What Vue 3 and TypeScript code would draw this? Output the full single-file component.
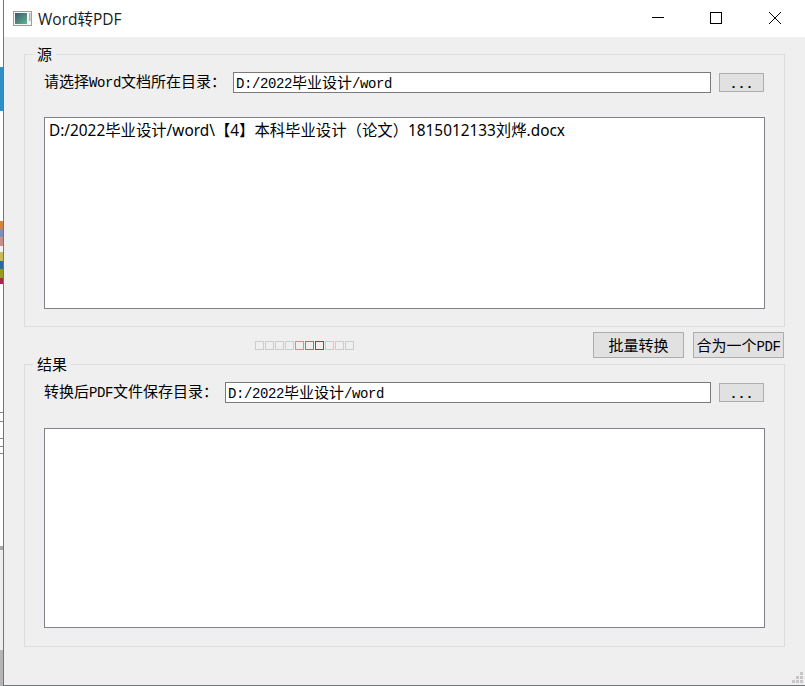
<script setup lang="ts">
const splitter = [
  '#cccccc', '#cccccc', '#cccccc', '#cccccc', '#c99393', '#c26464', '#b93333', '#cccccc', '#cccccc', '#cccccc',
]
const strip = [
  { h: 67, c: '#ffffff' },
  { h: 44, c: '#2f8fc8' },
  { h: 110, c: '#ffffff' },
  { h: 8, c: '#d9823c' },
  { h: 8, c: '#7f8fb8' },
  { h: 9, c: '#c98f88' },
  { h: 6, c: '#f2f2f2' },
  { h: 9, c: '#c9b95a' },
  { h: 8, c: '#2a6a9a' },
  { h: 9, c: '#9a9a20' },
  { h: 6, c: '#a8284c' },
  { h: 128, c: '#ffffff' },
  { h: 1, c: '#888888' },
  { h: 8, c: '#ffffff' },
  { h: 1, c: '#888888' },
  { h: 16, c: '#ffffff' },
  { h: 1, c: '#888888' },
  { h: 7, c: '#ffffff' },
  { h: 1, c: '#888888' },
  { h: 6, c: '#ffffff' },
  { h: 1, c: '#888888' },
  { h: 92, c: '#ffffff' },
  { h: 4, c: '#aaaaaa' },
  { h: 100, c: '#eeeeee' },
  { h: 36, c: '#b5b5b5' },
]
</script>

<template>
  <div class="screen">
    <div class="strip">
      <div v-for="(s, i) in strip" :key="i" :style="{ height: s.h + 'px', background: s.c }"></div>
    </div>
    <div class="window">
      <header class="titlebar">
        <svg class="appicon" width="19" height="15" viewBox="0 0 19 15">
          <defs>
            <linearGradient id="ic" x1="0" y1="0" x2="1" y2="1">
              <stop offset="0" stop-color="#3c5a6e" />
              <stop offset="1" stop-color="#5fb48c" />
            </linearGradient>
          </defs>
          <rect x="0.5" y="0.5" width="18" height="14" fill="#f6f6f6" stroke="#999ea3" />
          <rect x="2" y="2" width="12" height="11" fill="url(#ic)" />
          <rect x="16" y="2" width="1.5" height="8" fill="#a8b4b8" />
        </svg>
        <span class="wintitle">Word转PDF</span>
        <div class="controls">
          <button class="ctl ctl-min"><svg width="12" height="12" viewBox="0 0 12 12"><path d="M0 5.5H12" stroke="#000" fill="none" /></svg></button>
          <button class="ctl"><svg width="12" height="12" viewBox="0 0 12 12"><rect x="0.5" y="0.5" width="11" height="11" stroke="#000" fill="none" /></svg></button>
          <button class="ctl"><svg width="12" height="12" viewBox="0 0 12 12"><path d="M0 0L12 12M12 0L0 12" stroke="#000" fill="none" /></svg></button>
        </div>
      </header>

      <main class="content">
        <section class="group group-source">
          <span class="legend">源</span>
          <div class="row">
            <label class="label label-source">请选择<span class="m">Word</span>文档所在目录：</label>
            <div class="field"><span class="m">D:/2022</span>毕业设计<span class="m">/word</span></div>
            <button class="btn dots">...</button>
          </div>
          <div class="list list-source">D:/2022毕业设计/word\【4】本科毕业设计（论文）1815012133刘烨.docx</div>
        </section>

        <div class="actions">
          <div class="handle">
            <i v-for="(c, i) in splitter" :key="i" :style="{ borderColor: c }"></i>
          </div>
          <button class="btn action batch">批量转换</button>
          <button class="btn action merge">合为一个<span class="m">PDF</span></button>
        </div>

        <section class="group group-result">
          <span class="legend">结果</span>
          <div class="row">
            <label class="label label-result">转换后<span class="m">PDF</span>文件保存目录：</label>
            <div class="field"><span class="m">D:/2022</span>毕业设计<span class="m">/word</span></div>
            <button class="btn dots">...</button>
          </div>
          <div class="list list-result"></div>
        </section>

        <div class="grip">
          <i style="grid-area: 1 / 3"></i>
          <i style="grid-area: 2 / 2"></i>
          <i style="grid-area: 2 / 3"></i>
          <i style="grid-area: 3 / 1"></i>
          <i style="grid-area: 3 / 2"></i>
          <i style="grid-area: 3 / 3"></i>
        </div>
      </main>
    </div>
  </div>
</template>

<style>
html, body { margin: 0; padding: 0; background: #fff; overflow: hidden; }
</style>

<style scoped>
.screen {
  display: flex;
  width: 805px;
  height: 686px;
  overflow: hidden;
  font-family: "Noto Sans CJK SC", "Noto Sans", sans-serif;
  font-size: 15px;
  color: #000;
}
.strip { width: 3px; flex: none; display: flex; flex-direction: column; }
.window {
  flex: 1;
  display: flex;
  flex-direction: column;
  border-left: 1px solid #70757c;
  border-bottom: 1px solid #70757c;
  min-width: 0;
}
.titlebar {
  height: 37px;
  flex: none;
  background: #fff;
  display: flex;
  align-items: center;
  padding-left: 9px;
}
.appicon { flex: none; }
.wintitle {
  margin-left: 6px;
  margin-top: -1px;
  font-family: "Open Sans", "Noto Sans CJK SC", sans-serif;
  font-size: 15.5px;
  color: #1a1a1a;
}
.controls {
  margin-left: auto;
  align-self: flex-start;
  display: flex;
  padding: 12px 24px 0 0;
}
.ctl {
  width: 12px;
  height: 12px;
  border: 0;
  padding: 0;
  margin-left: 47px;
  background: transparent;
  display: block;
}
.ctl svg { display: block; }
.ctl-min { margin-right: -1px; }
.content {
  position: relative;
  flex: 1;
  background: #efefef;
  padding: 17px 20px 0;
  min-height: 0;
}
.group {
  position: relative;
  box-sizing: border-box;
  width: 761px;
  border: 1px solid #dcdcdc;
  padding: 17px 19px 0;
}
.group-source { height: 273px; }
.group-result { height: 283px; }
.legend {
  position: absolute;
  left: 8px;
  top: -10px;
  background: #efefef;
  padding: 0 4px;
  line-height: 18px;
}
.m {
  font-family: "Liberation Mono", monospace;
  font-size: 14px;
  letter-spacing: -0.4px;
}
.row { display: flex; align-items: center; height: 21px; }
.label { flex: none; white-space: nowrap; line-height: 19px; padding-bottom: 2px; }
.label-source { width: 189px; }
.label-result { width: 181px; }
.field {
  box-sizing: border-box;
  flex: 1;
  height: 21px;
  background: #fff;
  border: 1px solid #7a7a7a;
  padding: 0 2px;
  line-height: 17px;
  white-space: nowrap;
}
.btn {
  box-sizing: border-box;
  background: #e1e1e1;
  border: 1px solid #adadad;
  padding: 0;
  color: #000;
  font-family: inherit;
  font-size: 15px;
  white-space: nowrap;
}
.dots {
  flex: none;
  width: 45px;
  height: 19px;
  margin: 0 1px 0 8px;
  padding-top: 4px;
  font-family: "Liberation Mono", monospace;
  font-size: 13.33px;
  line-height: 14px;
  font-weight: bold;
}
.list {
  box-sizing: border-box;
  width: 721px;
  background: #fff;
  border: 1px solid #80828a;
}
.list-source {
  height: 192px;
  margin-top: 24px;
  padding: 3px 4px;
  font-family: "Noto Sans", "Noto Sans CJK SC", sans-serif;
  font-size: 15.36px;
  line-height: 20px;
  white-space: nowrap;
}
.list-result { height: 200px; margin-top: 25px; }
.actions {
  height: 37px;
  display: flex;
  align-items: flex-start;
  width: 760px;
}
.handle {
  display: flex;
  gap: 1px;
  margin-left: 231px;
  margin-top: 14px;
}
.handle i {
  box-sizing: border-box;
  display: block;
  width: 9px;
  height: 9px;
  border: 1px solid #ccc;
}
.action { height: 26px; width: 91px; margin-top: 5px; padding-bottom: 2px; }
.batch { margin-left: auto; }
.merge { margin-left: 9px; }
.grip {
  position: absolute;
  right: 2px;
  bottom: 2px;
  display: grid;
  grid-template-columns: repeat(3, 3px);
  grid-template-rows: repeat(3, 3px);
  gap: 1px;
}
.grip i { display: block; background: #c6c6c6; }
</style>
